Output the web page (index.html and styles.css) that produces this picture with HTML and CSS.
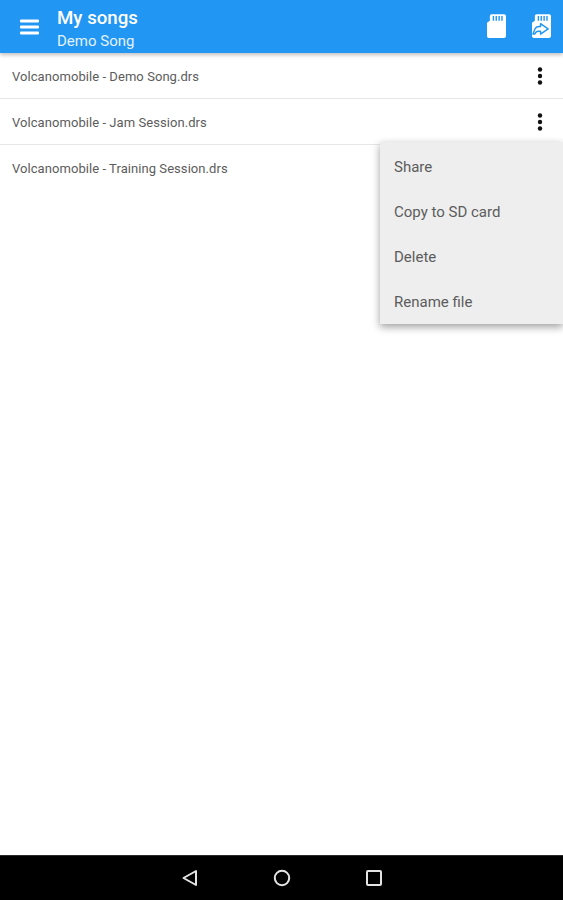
FILE: index.html
```html
<!DOCTYPE html>
<html lang="en">
<head>
<meta charset="utf-8">
<title>My songs</title>
<link rel="stylesheet" href="styles.css">
</head>
<body>
<div class="screen">
  <header class="appbar">
    <svg class="menu-icon" width="21" height="17" viewBox="0 0 21 17"><path d="M1 1.500Q1 0.500 2 0.500h17q1 0 1 1v1q0 1-1 1H2q-1 0-1-1zM1 7.500q0-1 1-1h17q1 0 1 1v1q0 1-1 1H2q-1 0-1-1zM1 13.500q0-1 1-1h17q1 0 1 1v1q0 1-1 1H2q-1 0-1-1z" fill="#fff"/></svg>
    <div class="titles">
      <div class="title">My songs</div>
      <div class="subtitle">Demo Song</div>
    </div>
    <div class="actions">
      <svg width="19" height="24" viewBox="0 0 20 25"><path fill="#fff" fill-rule="evenodd" d="M5 0h13a2 2 0 0 1 2 2v21a2 2 0 0 1-2 2H2a2 2 0 0 1-2-2V9l3-2V2a2 2 0 0 1 2-2zM6 2v5h1.500V2zM9 2v5h1.500V2zM12 2v5h1.500V2zM15 2v5h1.500V2z"/></svg>
      <svg width="19" height="24" viewBox="0 0 20 25"><path fill="#fff" fill-rule="evenodd" d="M5 0h13a2 2 0 0 1 2 2v21a2 2 0 0 1-2 2H2a2 2 0 0 1-2-2V9l3-2V2a2 2 0 0 1 2-2zM6 2v5h1.500V2zM9 2v5h1.500V2zM12 2v5h1.500V2zM15 2v5h1.500V2z"/><path fill="none" stroke="#2196f3" stroke-width="1.500" stroke-linejoin="round" d="M1 21l2-5q1-3 5-3h1V10l8 5.500-8 5.500v-3H7q-3 0-4 3z"/></svg>
    </div>
  </header>
  <main class="list">
    <div class="row"><span class="name">Volcanomobile - Demo Song.drs</span><svg class="dots" width="6" height="18" viewBox="0 0 6 18"><circle cx="3" cy="2.500" r="2.200"/><circle cx="3" cy="9" r="2.200"/><circle cx="3" cy="15.500" r="2.200"/></svg></div>
    <div class="row"><span class="name">Volcanomobile - Jam Session.drs</span><svg class="dots" width="6" height="18" viewBox="0 0 6 18"><circle cx="3" cy="2.500" r="2.200"/><circle cx="3" cy="9" r="2.200"/><circle cx="3" cy="15.500" r="2.200"/></svg></div>
    <div class="row last"><span class="name">Volcanomobile - Training Session.drs</span></div>
    <div class="popup">
      <div class="item">Share</div>
      <div class="item">Copy to SD card</div>
      <div class="item">Delete</div>
      <div class="item">Rename file</div>
    </div>
  </main>
  <nav class="navbar">
    <svg width="18" height="18" viewBox="0 0 18 18"><path d="M15 2v14L2.500 9z" fill="none" stroke="#e4e4e4" stroke-width="2" stroke-linejoin="round"/></svg>
    <svg width="18" height="18" viewBox="0 0 18 18"><circle cx="9" cy="9" r="7.200" fill="none" stroke="#e4e4e4" stroke-width="2"/></svg>
    <svg width="18" height="18" viewBox="0 0 18 18"><rect x="2" y="2" width="14" height="14" rx="1" fill="none" stroke="#e4e4e4" stroke-width="2"/></svg>
  </nav>
</div>
</body>
</html>
```
FILE: styles.css
```css
* { box-sizing: border-box; }
html, body { margin: 0; padding: 0; }
body { font-family: Roboto, "Liberation Sans", sans-serif; background: #fff; }
.screen { width: 563px; height: 900px; display: flex; flex-direction: column; overflow: hidden; }
.appbar { height: 53px; flex: none; background: #2196f3; color: #fff; display: flex; align-items: center; padding: 0 12px 0 19px; box-shadow: 0 2px 4px rgba(0,0,0,.25); position: relative; z-index: 2; }
.menu-icon { flex: none; margin-right: 17px; margin-top: 1px; }
.titles { flex: 1; display: flex; flex-direction: column; padding-top: 4px; }
.title { font-size: 18.700px; font-weight: 500; line-height: 22px; }
.subtitle { font-size: 15px; line-height: 20px; color: #e3f2fd; margin-top: 2px; }
.actions { display: flex; gap: 26px; align-items: center; margin-top: -1px; }
.list { flex: 1; position: relative; background: #fff; }
.row { height: 46px; border-bottom: 1px solid #e6e6e6; display: flex; align-items: center; justify-content: space-between; padding: 1px 20px 0 12px; }
.row.last { border-bottom: 0; padding-top: 0; }
.row .dots { margin-top: -1px; }
.name { font-size: 13px; color: #5c5c5c; letter-spacing: .06px; }
.dots { fill: #111; }
.popup { position: absolute; top: 89px; right: 0; width: 183px; height: 182px; background: #eee; padding: 2px 0; box-shadow: 0 3px 8px rgba(0,0,0,.38); }
.item { height: 45px; display: flex; align-items: center; padding-left: 14px; font-size: 15px; color: #5c5c5c; }
.navbar { height: 45px; flex: none; background: #000; display: flex; align-items: center; justify-content: center; gap: 74px; border-top: 1px solid #2a2a2a; }
```
